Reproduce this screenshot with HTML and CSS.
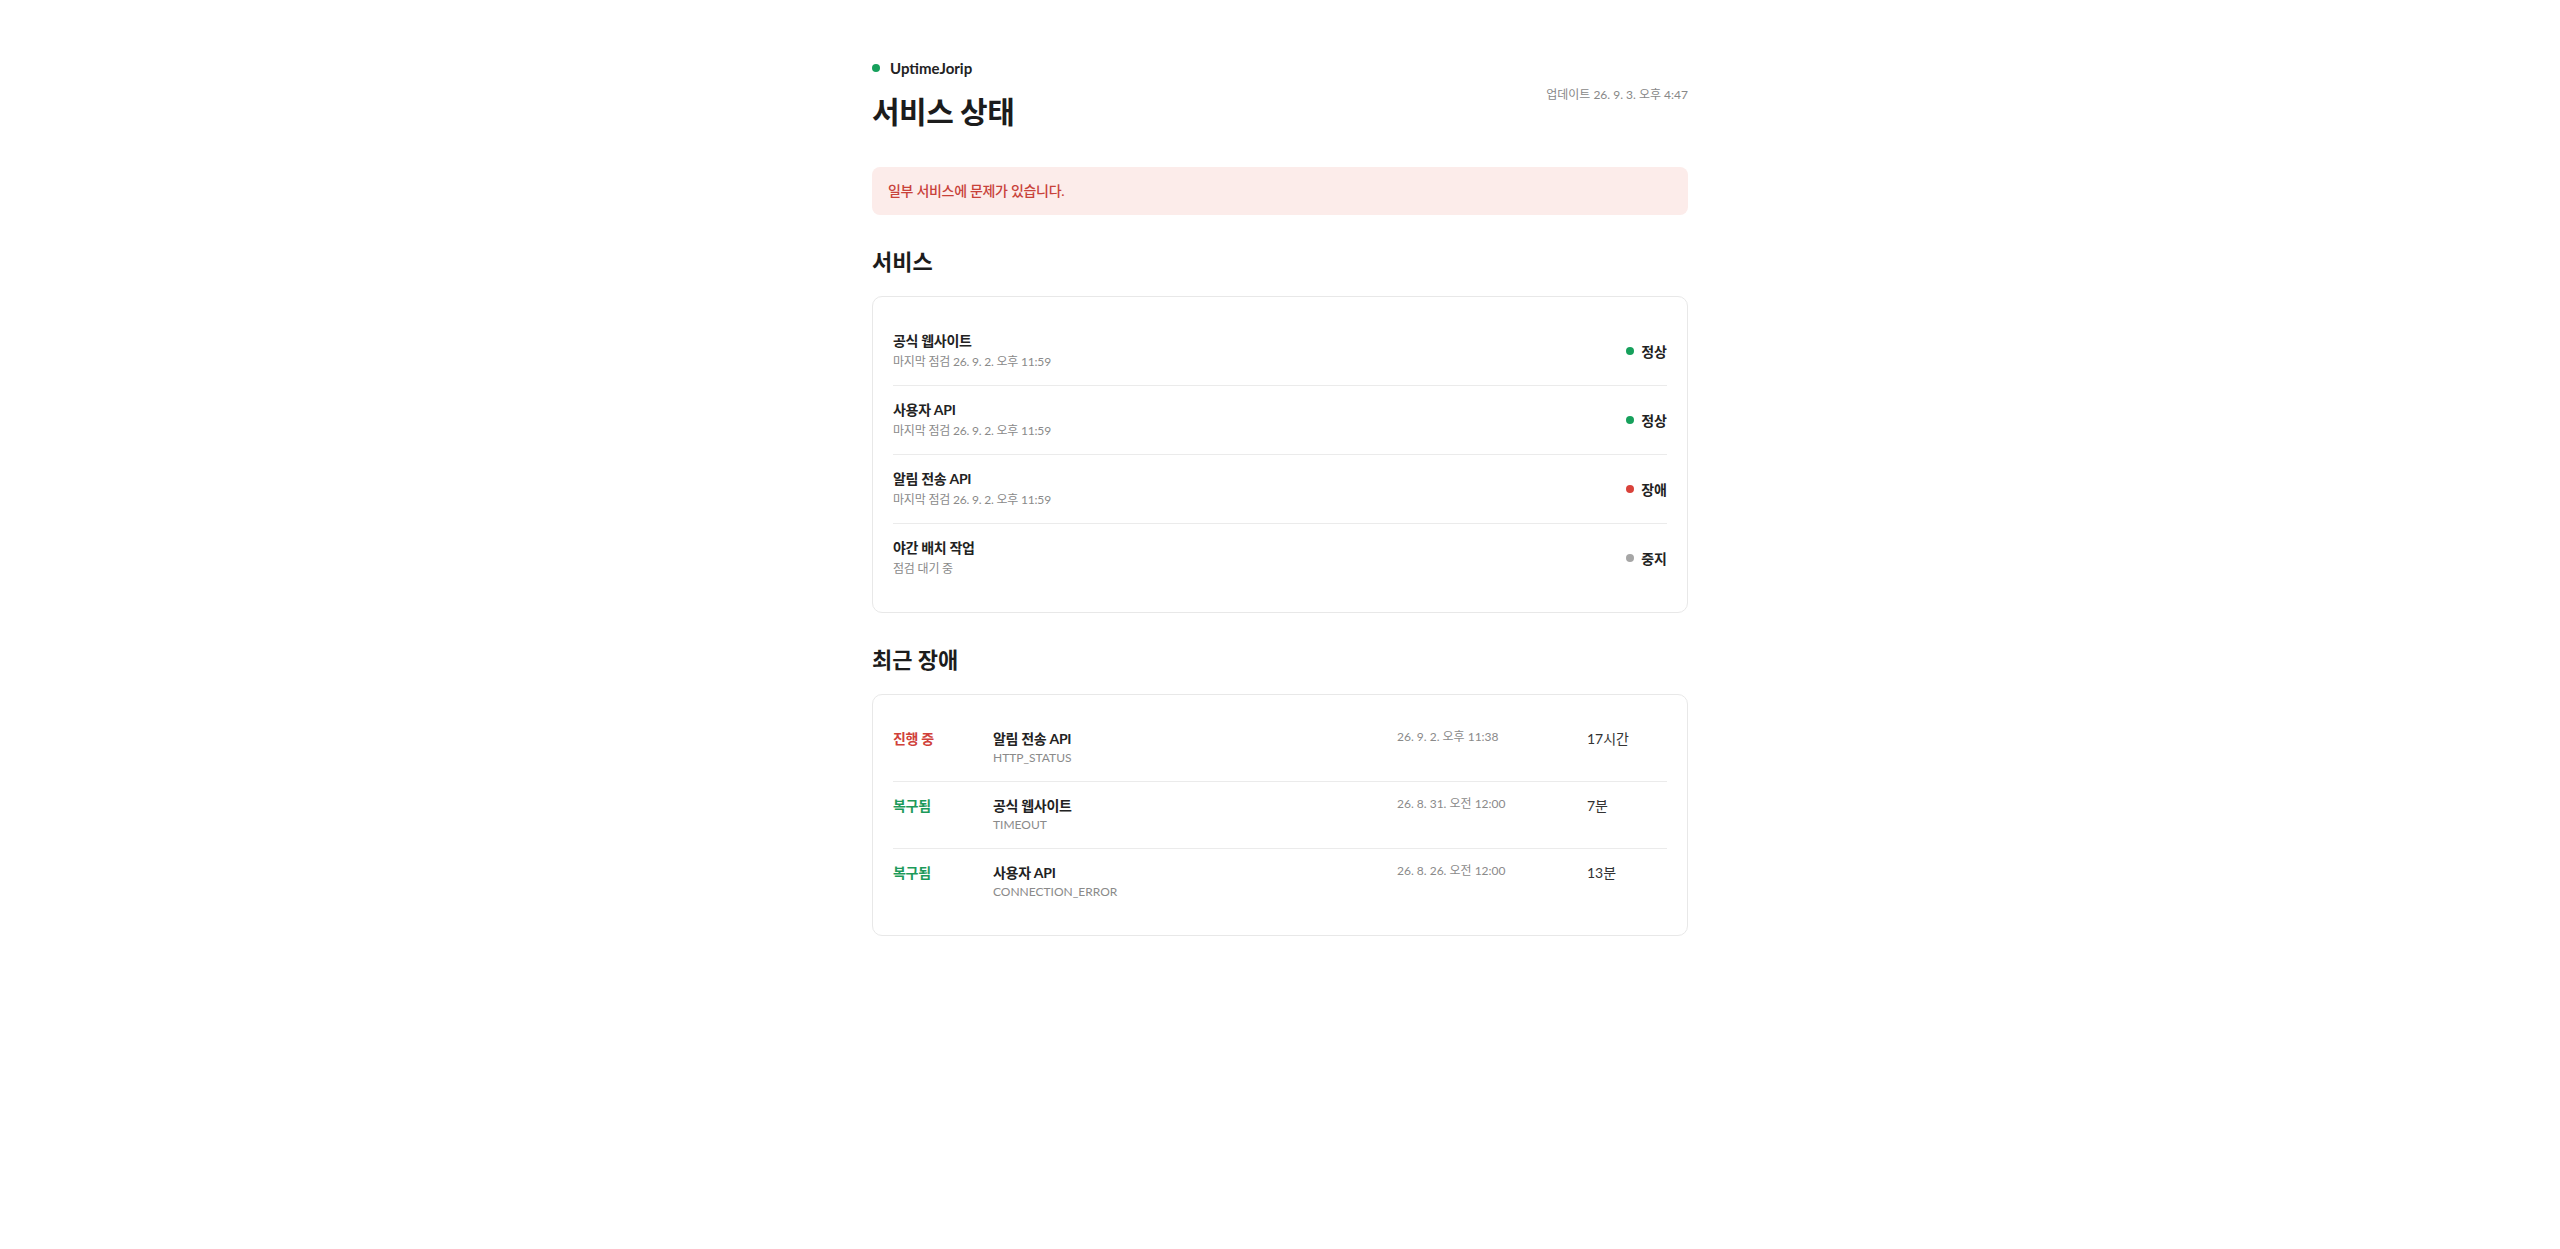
FILE: index.html
```html
<!DOCTYPE html>
<html lang="ko">
<head>
    <meta charset="UTF-8">
    <meta name="viewport" content="width=device-width, initial-scale=1.0">
    <title>서비스 상태 - UptimeJorip</title>
    <link rel="stylesheet" href="styles.css">
</head>
<body>
    <div class="container">
        <div class="header">
            <div class="header-left">
                <div class="brand">
                    <span class="dot up"></span>
                    <span>UptimeJorip</span>
                </div>
                <h1>서비스 상태</h1>
            </div>
            <div class="updated">업데이트 26. 9. 3. 오후 4:47</div>
        </div>

        <div class="alert">일부 서비스에 문제가 있습니다.</div>

        <div class="section">
            <h2>서비스</h2>
            <div class="card">
                <div class="service-row">
                    <div class="service-info">
                        <div class="service-name">공식 웹사이트</div>
                        <div class="service-meta">마지막 점검 26. 9. 2. 오후 11:59</div>
                    </div>
                    <div class="status"><span class="dot up"></span>정상</div>
                </div>
                <div class="service-row">
                    <div class="service-info">
                        <div class="service-name">사용자 API</div>
                        <div class="service-meta">마지막 점검 26. 9. 2. 오후 11:59</div>
                    </div>
                    <div class="status"><span class="dot up"></span>정상</div>
                </div>
                <div class="service-row">
                    <div class="service-info">
                        <div class="service-name">알림 전송 API</div>
                        <div class="service-meta">마지막 점검 26. 9. 2. 오후 11:59</div>
                    </div>
                    <div class="status"><span class="dot down"></span>장애</div>
                </div>
                <div class="service-row">
                    <div class="service-info">
                        <div class="service-name">야간 배치 작업</div>
                        <div class="service-meta">점검 대기 중</div>
                    </div>
                    <div class="status"><span class="dot paused"></span>중지</div>
                </div>
            </div>
        </div>

        <div class="section">
            <h2>최근 장애</h2>
            <div class="card">
                <div class="incident-row">
                    <div class="incident-state ongoing">진행 중</div>
                    <div>
                        <div class="service-name">알림 전송 API</div>
                        <div class="incident-cause">HTTP_STATUS</div>
                    </div>
                    <div class="incident-time">26. 9. 2. 오후 11:38</div>
                    <div class="incident-duration">17시간</div>
                </div>
                <div class="incident-row">
                    <div class="incident-state resolved">복구됨</div>
                    <div>
                        <div class="service-name">공식 웹사이트</div>
                        <div class="incident-cause">TIMEOUT</div>
                    </div>
                    <div class="incident-time">26. 8. 31. 오전 12:00</div>
                    <div class="incident-duration">7분</div>
                </div>
                <div class="incident-row">
                    <div class="incident-state resolved">복구됨</div>
                    <div>
                        <div class="service-name">사용자 API</div>
                        <div class="incident-cause">CONNECTION_ERROR</div>
                    </div>
                    <div class="incident-time">26. 8. 26. 오전 12:00</div>
                    <div class="incident-duration">13분</div>
                </div>
            </div>
        </div>
    </div>
</body>
</html>
```

FILE: styles.css
```css
* {
    margin: 0;
    padding: 0;
    box-sizing: border-box;
}

body {
    font-family: 'Lato', 'Noto Sans CJK KR', sans-serif;
    background: #fff;
    color: #222;
    min-height: 100vh;
}

.container {
    max-width: 816px;
    margin: 0 auto;
    padding: 56px 0 48px;
}

.header {
    display: flex;
    justify-content: space-between;
    align-items: center;
    margin-bottom: 36px;
}

.brand {
    display: flex;
    align-items: center;
    gap: 10px;
    font-size: 15px;
    font-weight: 700;
    line-height: 24px;
    color: #222;
}

.header h1 {
    margin-top: 12px;
    font-size: 30px;
    font-weight: 700;
    line-height: 1.3;
    color: #1c1c1c;
    letter-spacing: -0.5px;
}

.updated {
    font-size: 12px;
    color: #888;
}

.alert {
    background: #fcecea;
    color: #c8423a;
    border-radius: 8px;
    padding: 14px 16px;
    font-size: 14px;
    line-height: 20px;
    font-weight: 500;
    letter-spacing: -0.3px;
}

.section {
    margin-top: 32px;
}

.section h2 {
    font-size: 22px;
    font-weight: 700;
    line-height: 30px;
    margin-bottom: 19px;
    color: #1c1c1c;
}

.card {
    border: 1px solid #e8e8e8;
    border-radius: 10px;
    padding: 20px;
    background: #fff;
}

.service-row {
    display: flex;
    justify-content: space-between;
    align-items: center;
    padding: 14px 0;
    border-bottom: 1px solid #ebebeb;
}

.service-row:last-child,
.incident-row:last-child {
    border-bottom: none;
}

.service-name {
    font-size: 14px;
    font-weight: 700;
    line-height: 20px;
    color: #222;
    letter-spacing: -0.3px;
}

.service-meta {
    margin-top: 2px;
    font-size: 12px;
    line-height: 18px;
    color: #8a8a8a;
    letter-spacing: -0.2px;
}

.status {
    display: flex;
    align-items: center;
    gap: 7px;
    font-size: 14px;
    font-weight: 700;
    color: #222;
}

.dot {
    display: inline-block;
    width: 8px;
    height: 8px;
    border-radius: 50%;
}

.dot.up { background: #16a05c; }
.dot.down { background: #d9423a; }
.dot.paused { background: #a6a6a6; }

.incident-row {
    display: grid;
    grid-template-columns: 100px 1fr 190px 80px;
    align-items: start;
    padding: 14px 0;
    border-bottom: 1px solid #ebebeb;
}

.incident-state {
    font-size: 14px;
    font-weight: 700;
    line-height: 20px;
    letter-spacing: -0.3px;
}

.incident-state.ongoing { color: #d0413a; }
.incident-state.resolved { color: #1d9a5a; }

.incident-cause {
    font-size: 12px;
    line-height: 18px;
    color: #8a8a8a;
}

.incident-time {
    font-size: 12px;
    line-height: 16px;
    color: #8a8a8a;
}

.incident-duration {
    font-size: 14px;
    line-height: 20px;
    color: #333;
}
```
